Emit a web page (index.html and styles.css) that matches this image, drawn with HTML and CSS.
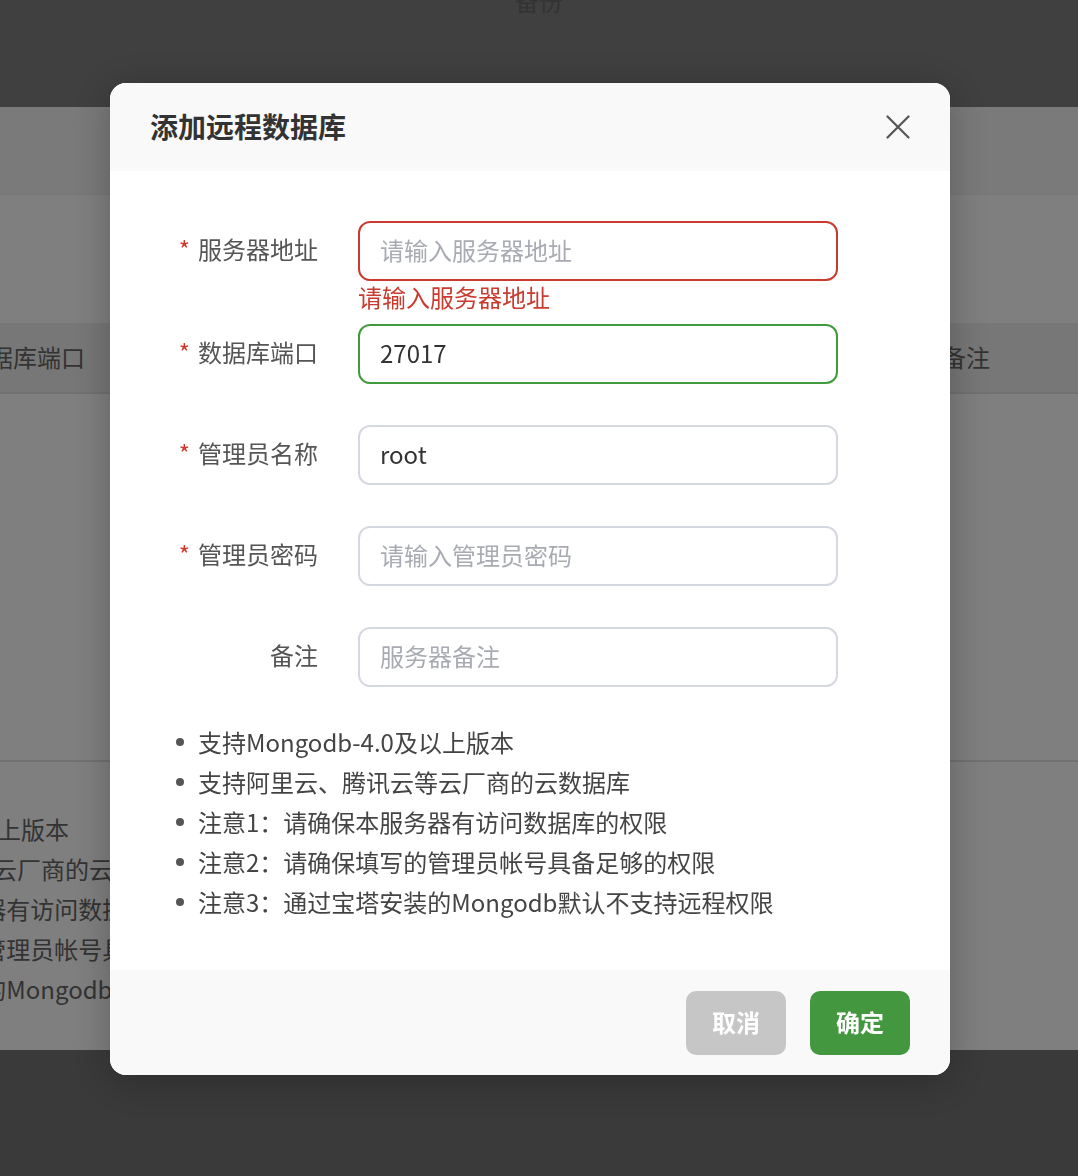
FILE: index.html
```html
<!DOCTYPE html>
<html lang="zh-CN">
<head>
<meta charset="utf-8">
<title>添加远程数据库</title>
<link rel="stylesheet" href="styles.css">
</head>
<body>
  <div class="page">
    <div class="topbar"><span class="tab">备份</span></div>
    <div class="panel">
      <div class="toolbar"></div>
      <div class="gap-row"></div>
      <div class="thead">
        <span class="th th-port">数据库端口</span>
        <span class="th th-note">备注</span>
      </div>
      <div class="tbody"></div>
      <ul class="page-tips">
        <li>支持Mongodb-4.0及以上版本</li>
        <li>支持阿里云、腾讯云等云厂商的云数据库</li>
        <li>注意1：请确保本服务器有访问数据库的权限</li>
        <li>注意2：请确保填写的管理员帐号具备足够的权限</li>
        <li>注意3：通过宝塔安装的Mongodb默认不支持远程权限</li>
      </ul>
    </div>
    <div class="page-foot"></div>
  </div>

  <div class="mask">
    <div class="dialog">
      <div class="dlg-head">
        <h2 class="dlg-title">添加远程数据库</h2>
        <button class="dlg-close" type="button" aria-label="关闭">
          <svg width="24" height="24" viewBox="0 0 24 24"><path d="M1.5 1.5L22.5 22.5M22.5 1.5L1.5 22.5" stroke="currentColor" stroke-width="2.2" stroke-linecap="round" fill="none"/></svg>
        </button>
      </div>

      <div class="dlg-body">
        <div class="form-item has-error">
          <label class="form-label"><span class="req">*</span>服务器地址</label>
          <div class="form-control">
            <input class="input input-error" type="text" placeholder="请输入服务器地址">
            <div class="form-error">请输入服务器地址</div>
          </div>
        </div>
        <div class="form-item">
          <label class="form-label"><span class="req">*</span>数据库端口</label>
          <div class="form-control">
            <input class="input input-ok" type="text" value="27017">
          </div>
        </div>
        <div class="form-item">
          <label class="form-label"><span class="req">*</span>管理员名称</label>
          <div class="form-control">
            <input class="input" type="text" value="root">
          </div>
        </div>
        <div class="form-item">
          <label class="form-label"><span class="req">*</span>管理员密码</label>
          <div class="form-control">
            <input class="input" type="text" placeholder="请输入管理员密码">
          </div>
        </div>
        <div class="form-item last">
          <label class="form-label">备注</label>
          <div class="form-control">
            <input class="input" type="text" placeholder="服务器备注">
          </div>
        </div>

        <ul class="tips">
          <li>支持Mongodb-4.0及以上版本</li>
          <li>支持阿里云、腾讯云等云厂商的云数据库</li>
          <li>注意1：请确保本服务器有访问数据库的权限</li>
          <li>注意2：请确保填写的管理员帐号具备足够的权限</li>
          <li>注意3：通过宝塔安装的Mongodb默认不支持远程权限</li>
        </ul>
      </div>

      <div class="dlg-foot">
        <button class="btn btn-cancel" type="button">取消</button>
        <button class="btn btn-ok" type="button">确定</button>
      </div>
    </div>
  </div>
</body>
</html>
```

FILE: styles.css
```css
* {
  box-sizing: border-box;
}

html, body {
  margin: 0;
  padding: 0;
  height: 100%;
  overflow: hidden;
}

body {
  font-family: "Noto Sans CJK SC", "Noto Sans", sans-serif;
  font-size: 24px;
  color: #444;
  background: #747474;
}

/* ---------- page underneath the modal ---------- */
.page {
  width: 1078px;
  height: 1176px;
  overflow: hidden;
}

.topbar {
  height: 107px;
  background: #808080;
  display: flex;
  justify-content: center;
}

.tab {
  margin-top: -13px;
  line-height: 28px;
  height: 28px;
  color: #666;
}

.panel {
  height: 943px;
  background: #fff;
  overflow: hidden;
}

.toolbar {
  height: 88px;
  background: #f4f4f4;
  border-bottom: 1px solid #f0f0f0;
}

.gap-row {
  height: 128px;
}

.thead {
  height: 71px;
  background: #eeeeee;
  border-bottom: 2px solid #e2e2e2;
  display: flex;
  align-items: center;
  padding-bottom: 3px;
  color: #666;
}

.th-port {
  margin-left: -35px;
}

.th-note {
  margin-left: auto;
  width: 136px;
}

.tbody {
  height: 368px;
  border-bottom: 2px solid #e2e2e2;
}

.page-tips {
  list-style: none;
  margin: 47px 0 0 -247px;
  padding: 0;
  line-height: 40px;
  color: #666;
  white-space: nowrap;
}

.page-foot {
  height: 126px;
  background: #747474;
}

/* ---------- modal ---------- */
.mask {
  position: fixed;
  inset: 0;
  background: rgba(0, 0, 0, 0.5);
}

.dialog {
  margin: 83px 0 0 110px;
  width: 840px;
  height: 992px;
  background: #fff;
  border-radius: 16px;
  overflow: hidden;
  box-shadow: 0 6px 40px rgba(0, 0, 0, 0.25);
  display: flex;
  flex-direction: column;
}

.dlg-head {
  height: 88px;
  flex: none;
  background: #f9f9f9;
  display: flex;
  align-items: center;
  justify-content: space-between;
  padding: 0 40px;
}

.dlg-title {
  margin: 0;
  font-size: 28px;
  font-weight: 700;
  line-height: 36px;
  padding-bottom: 2px;
  color: #333;
}

.dlg-close {
  border: 0;
  padding: 0;
  background: none;
  width: 24px;
  height: 24px;
  color: #555;
  display: flex;
}

.dlg-body {
  flex: 1;
  padding: 50px 40px 0 40px;
}

.form-item {
  display: flex;
  margin-bottom: 41px;
}

.form-item.has-error {
  margin-bottom: 9px;
}

.form-item.last {
  margin-bottom: 35px;
}

.form-label {
  width: 168px;
  height: 60px;
  margin-right: 40px;
  text-align: right;
  line-height: 56px;
  padding-bottom: 4px;
  color: #555;
  white-space: nowrap;
}

.req {
  color: #d0382c;
  margin-right: 8px;
}

.form-control {
  width: 480px;
}

.input {
  display: block;
  width: 480px;
  height: 60px;
  border: 2px solid #d6d8e1;
  border-radius: 12px;
  padding: 0 20px 4px 20px;
  font-family: inherit;
  font-size: 24px;
  color: #333;
  background: #fff;
  outline: none;
}

.input::placeholder {
  color: #a8abb2;
}

.input-error {
  border-color: #c93a2f;
}

.input-ok {
  border-color: #3f9b3c;
}

.form-error {
  line-height: 32px;
  height: 34px;
  color: #c93a2f;
}

.tips {
  list-style: none;
  margin: 0;
  padding: 0;
  line-height: 40px;
  color: #444;
}

.tips li {
  display: flex;
  align-items: center;
}

.tips li::before {
  content: "";
  width: 8px;
  height: 8px;
  border-radius: 50%;
  background: #555;
  margin: 0 14px 0 26px;
  flex: none;
}

.dlg-foot {
  height: 105px;
  flex: none;
  background: #f9f9f9;
  display: flex;
  align-items: center;
  justify-content: flex-end;
  gap: 24px;
  padding: 1px 40px 0 40px;
}

.btn {
  width: 100px;
  height: 64px;
  border: 0;
  border-radius: 10px;
  padding: 0 0 4px 0;
  font-family: inherit;
  font-size: 24px;
  font-weight: 700;
  color: #fff;
}

.btn-cancel {
  background: #c6c6c6;
}

.btn-ok {
  background: #43973e;
}
```
